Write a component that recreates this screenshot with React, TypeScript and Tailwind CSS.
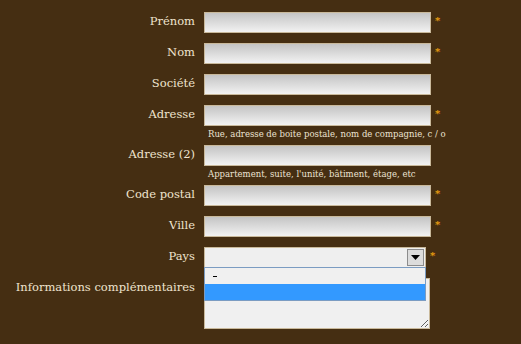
const fields = [
  { label: "Prénom", required: true },
  { label: "Nom", required: true },
  { label: "Société", required: false },
  { label: "Adresse", required: true, hint: "Rue, adresse de boite postale, nom de compagnie, c / o" },
  { label: "Adresse (2)", required: false, hint: "Appartement, suite, l'unité, bâtiment, étage, etc" },
  { label: "Code postal", required: true },
  { label: "Ville", required: true },
];

const labelCls = "w-[204px] pr-[9px] text-right text-[11.5px] leading-[18px] text-[#efe4cf]";

function Star() {
  return <span className="ml-[4px] mt-[4px] text-[10px] leading-none font-bold text-[#f0a010]">*</span>;
}

function TextInput() {
  return (
    <div className="h-[21px] w-[227px] border border-[#c9b99b] bg-[linear-gradient(#c4c4c4,#f2f2f2)]" />
  );
}

export default function App() {
  return (
    <div className="min-h-[344px] w-[521px] overflow-hidden bg-[#452e12] pt-[12px] [font-family:'DejaVu_Serif',serif]">
      {fields.map((f) => (
        <div key={f.label} className={f.hint ? "h-[40px]" : "h-[31px]"}>
          <div className="flex items-start">
            <label className={labelCls}>{f.label}</label>
            <TextInput />
            {f.required && <Star />}
          </div>
          {f.hint && (
            <p className="ml-[208px] mt-[1px] text-[8.5px] leading-[14px] text-[#ece3d2]">{f.hint}</p>
          )}
        </div>
      ))}

      <div className="relative h-[31px]">
        <div className="flex items-start">
          <label className={labelCls}>Pays</label>
          <div className="flex h-[21px] w-[222px] justify-end border border-[#c9b99b] bg-[#efefef] p-px">
            <div className="flex h-full w-[17px] items-center justify-center border border-[#8c8c8c] bg-[#dcdcdc]">
              <svg width="9" height="6" viewBox="0 0 9 6">
                <path d="M0 0h9L4.5 5z" fill="#000" />
              </svg>
            </div>
          </div>
          <Star />
        </div>
        <div className="absolute left-[204px] top-[20px] z-10 w-[222px] border border-[#7b9cc2] bg-[#f0f0f0]">
          <div className="flex h-[16px] items-center pl-[8px]">
            <span className="h-px w-[4px] bg-black" />
          </div>
          <div className="h-[16px] bg-[#3399ff]" />
        </div>
      </div>

      <div className="flex items-start">
        <label className={labelCls}>Informations complémentaires</label>
        <textarea className="h-[51px] w-[226px] resize-y border border-[#c9b99b] bg-[#f0f0f0] outline-none" />
      </div>
    </div>
  );
}
